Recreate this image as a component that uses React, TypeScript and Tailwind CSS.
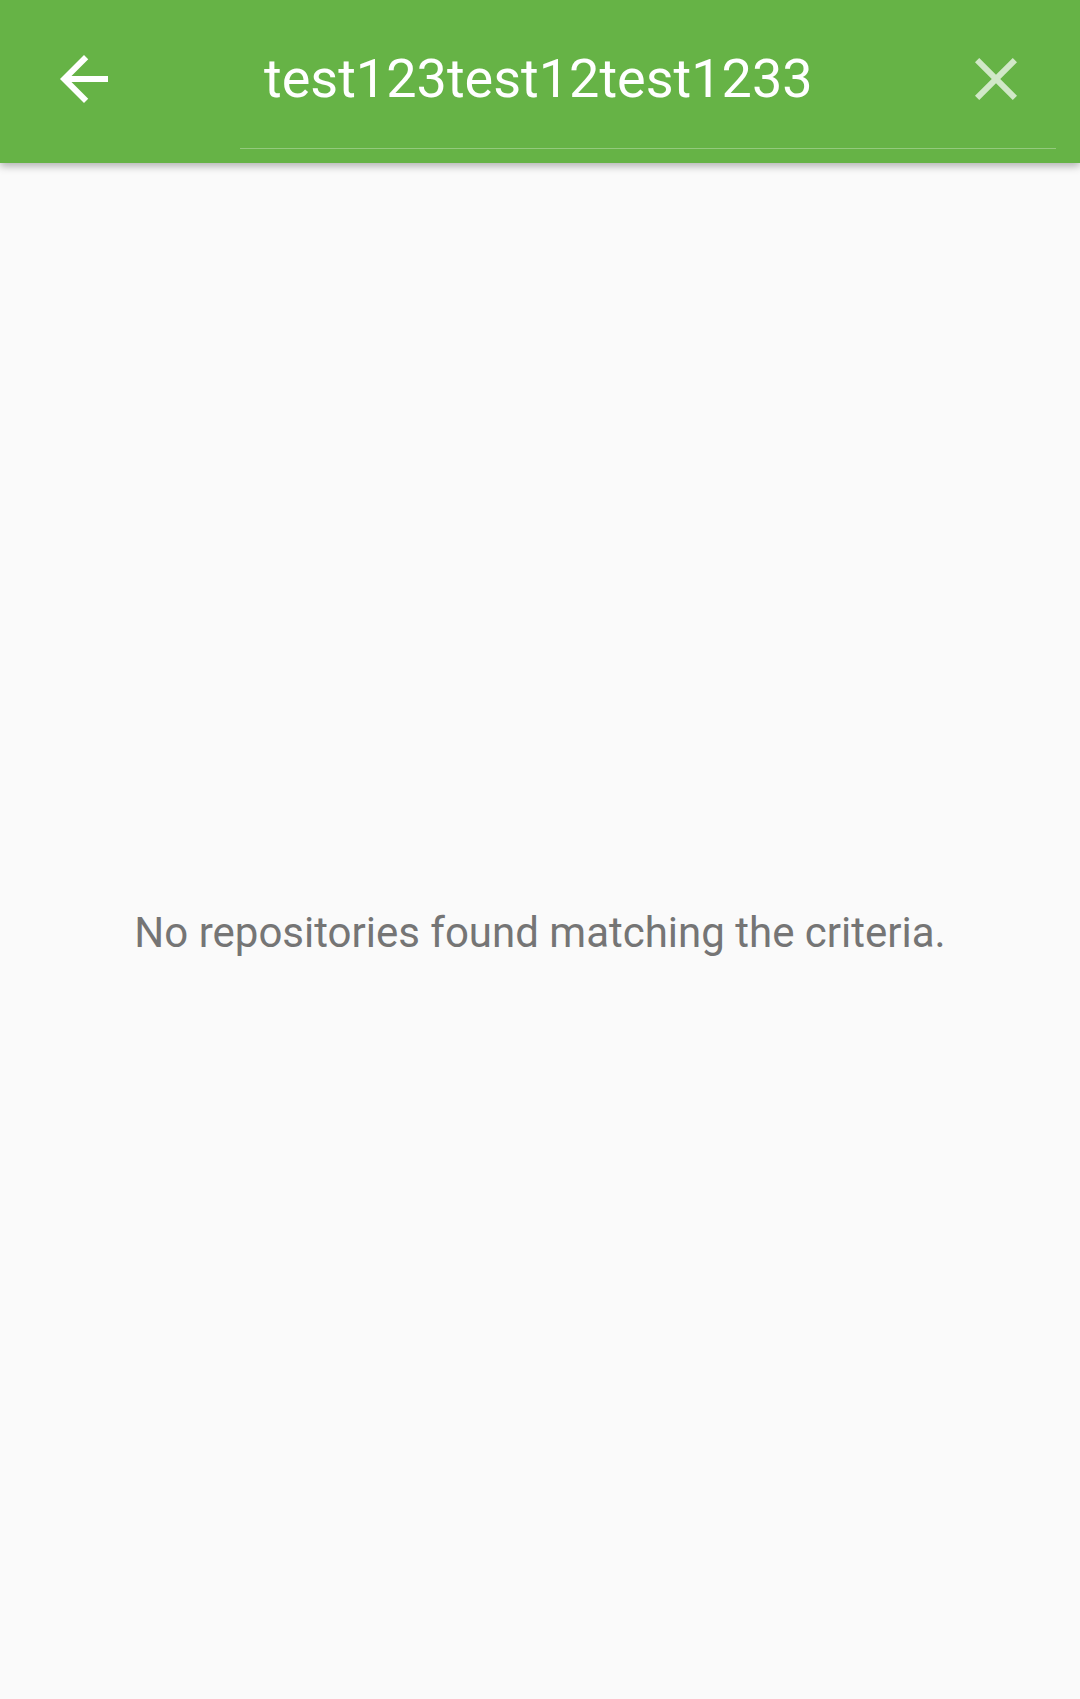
import React from 'react';

const SearchHeader: React.FC<{ query: string }> = ({ query }) => (
  <header className="relative z-10 flex h-[163px] shrink-0 items-start bg-[#66b346] shadow-[0_3px_8px_rgba(0,0,0,0.3)]">
    {/* back */}
    <button className="ml-[48px] mt-[43px] flex h-[72px] w-[72px] items-center justify-center text-white">
      <svg viewBox="0 0 24 24" className="h-[72px] w-[72px]" fill="currentColor">
        <path d="M20 11H7.83l5.59-5.59L12 4l-8 8 8 8 1.41-1.41L7.83 13H20v-2z" />
      </svg>
    </button>

    {/* search field, underline sits a little above the bar's bottom edge */}
    <div className="ml-[120px] mr-[24px] flex h-[149px] flex-1 items-center border-b border-white/30 pt-[10px]">
      <div className="flex-1 pl-[24px] text-[54px] leading-none text-white">{query}</div>
      <button className="mr-[24px] flex h-[72px] w-[72px] items-center justify-center text-white/70">
        <svg viewBox="0 0 24 24" className="h-[72px] w-[72px]" fill="currentColor">
          <path d="M19 6.41L17.59 5 12 10.59 6.41 5 5 6.41 10.59 12 5 17.59 6.41 19 12 13.41 17.59 19 19 17.59 13.41 12z" />
        </svg>
      </button>
    </div>
  </header>
);

const App: React.FC = () => {
  return (
    <div className="flex h-[1699px] w-[1080px] flex-col overflow-hidden bg-[#fafafa] font-['Roboto',sans-serif]">
      <SearchHeader query="test123test12test1233" />
      <main className="flex flex-1 items-center justify-center pt-[4px]">
        <p className="text-center text-[42px] leading-none text-[#757575]">
          No repositories found matching the criteria.
        </p>
      </main>
    </div>
  );
};

export default App;
